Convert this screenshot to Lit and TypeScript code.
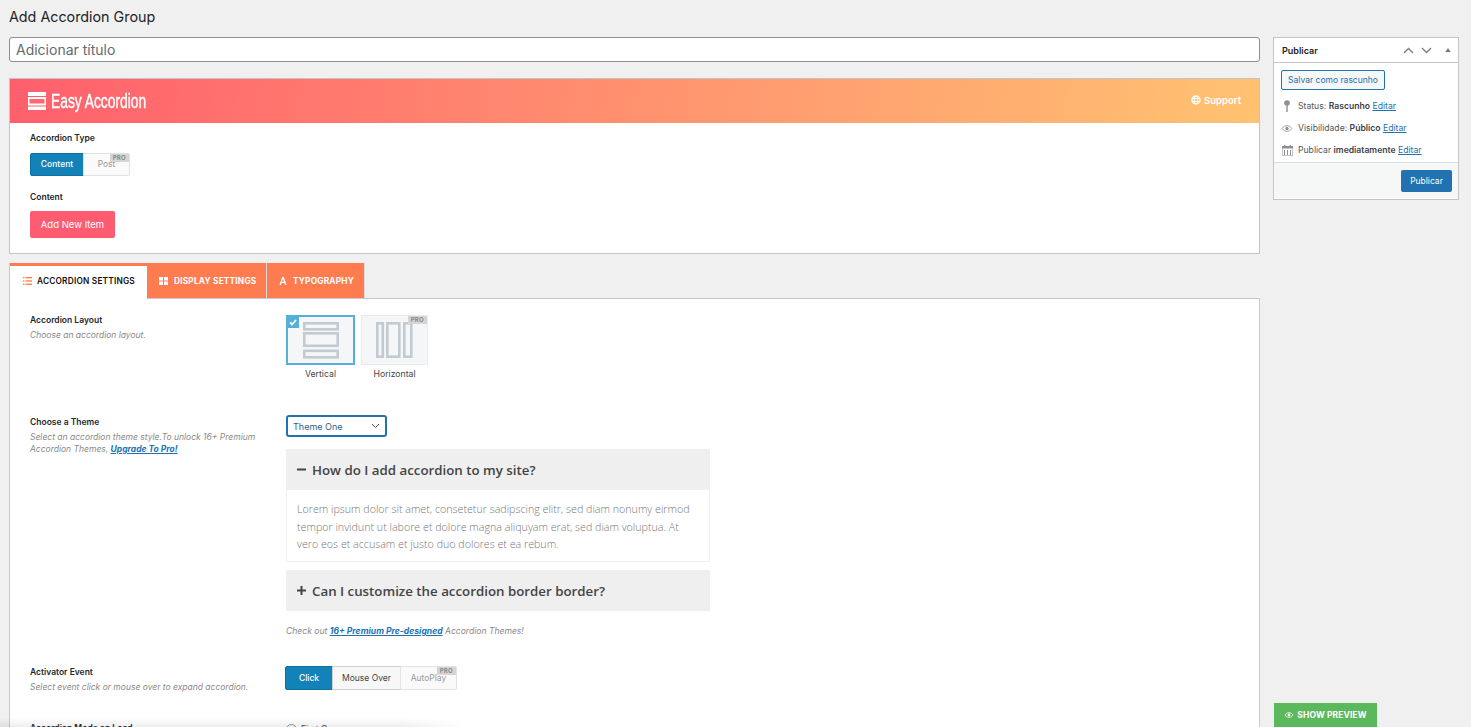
import { LitElement, html, css } from "lit";
import { customElement } from "lit/decorators.js";

const eye = (w: number, c: string) => html`<svg width=${w} height=${Math.round(w * 0.62)} viewBox="0 0 16 10"><path fill="none" stroke=${c} stroke-width="1.2" d="M1 5c2-2.6 4.4-4 7-4s5 1.4 7 4c-2 2.6-4.400 4-7 4S3 7.600 1 5z"/><circle cx="8" cy="5" r="2.400" fill=${c}/></svg>`;

@customElement("app-root")
export class AppRoot extends LitElement {
  static styles = css`
    :host { display: block; height: 727px; overflow: hidden; background: #f0f0f1; font-family: Inter, "Liberation Sans", sans-serif; color: #1d2327; position: relative; }
    * { box-sizing: border-box; }
    a { color: #2271b1; text-decoration: underline; }
    .page { display: grid; grid-template-columns: 1251px 186px; column-gap: 13px; padding: 0 0 0 9px; }
    h1 { margin: 0; font-size: 14.300px; font-weight: 400; line-height: 17px; padding-top: 8px; height: 37px; }
    .title { height: 25px; background: #fff; border: 1px solid #8c8f94; border-radius: 3px; font-size: 14px; color: #646970; padding: 0 6px; line-height: 23px; }
    .card { margin-top: 16px; height: 176px; background: #fff; border: 1px solid #c3c4c7; }
    .hero { height: 44px; background: linear-gradient(100deg, #ff5f6d, #ffc371); display: flex; align-items: center; justify-content: space-between; padding: 0 18px; color: #fff; }
    .brand { display: flex; align-items: center; gap: 5px; }
    .brand span { font-family: "Liberation Sans", sans-serif; font-size: 20px; line-height: 24px; display: inline-block; transform: scaleX(0.69); transform-origin: left center; white-space: nowrap; -webkit-text-stroke: 0.4px #fff; }
    .support { display: flex; align-items: center; gap: 3px; font-size: 9.500px; font-weight: 600; margin-top: -2px; }
    .body { padding: 9px 20px; }
    .lab { font-size: 8.500px; font-weight: 600; line-height: 12px; color: #23282d; white-space: nowrap; }
    .seg { display: flex; width: fit-content; height: 23px; position: relative; margin-top: 9px; }
    .seg > div { display: flex; align-items: center; justify-content: center; font-size: 8.500px; border: 1px solid #ccc; background: #f7f7f7; color: #444; margin-left: -1px; position: relative; padding-bottom: 1px; }
    .seg > div:first-child { margin-left: 0; border-radius: 2px 0 0 2px; }
    .seg > div:last-child { border-radius: 0 2px 2px 0; }
    .seg > .on { background: #1282b9; border-color: #0f6fa0; color: #fff; font-weight: 500; }
    .seg > .dis { color: #999; background: #fafafa; border-color: #e2e2e2; }
    .pro { position: absolute; top: 0; right: 0; background: #d5d5d5; color: #888; font-size: 6px; font-weight: 700; line-height: 7px; padding: 0 3px; letter-spacing: .3px; height: 8px; }
    .lab2 { margin-top: 15px; }
    .add { margin-top: 8px; width: 85px; height: 27px; background: #ff5c72; border-radius: 2px; color: #fff; font-size: 9.500px; display: flex; align-items: center; justify-content: center; }
    .tabwrap { margin-top: 9px; }
    .tabs { display: flex; height: 36px; border-left: 1px solid #c9c9c9; border-bottom: 1px solid #c9c9c9; }
    .tab { height: 35px; background: #ff7c50; color: #fff; font-size: 8.300px; font-weight: 700; display: flex; align-items: center; letter-spacing: 0.2px; border-right: 1px solid #dcdcdc; white-space: nowrap; gap: 6px; }
    .tab.cur { background: #fff; color: #111; border-top: 3px solid #ff7c50; height: 36px; margin-bottom: -1px; border-right: 0; font-weight: 600; padding-bottom: 3px; gap: 5px; }
    .panel { background: #fff; border: 1px solid #c9c9c9; border-top: 0; height: 500px; padding: 0 20px; display: grid; grid-template-columns: 256px 1fr; align-content: start; }
    .desc { font-size: 8.500px; font-style: italic; color: #8a8a8a; line-height: 12px; margin-top: 3px; white-space: nowrap; }
    .row1 { height: 102px; padding-top: 15px; }
    .row1c { height: 102px; padding-top: 16px; display: flex; gap: 6px; }
    .lay { width: 69px; }
    .lay2 { width: 67px; }
    .box { width: 100%; height: 50px; background: #f5f6f8; border: 2px solid #54b0d8; position: relative; display: flex; align-items: center; justify-content: center; }
    .box.off { border: 1px solid #eaebed; height: 50px; }
    .cap { font-size: 8.700px; text-align: center; color: #444; line-height: 10px; margin-top: 4px; }
    .tick { position: absolute; left: -1px; top: -1px; width: 12px; height: 12px; background: #54b0d8; display: flex; align-items: center; justify-content: center; }
    .row2 { height: 265px; padding-top: 15px; }
    .row2c { height: 265px; padding-top: 14px; }
    .select { width: 101px; height: 22px; border: 2px solid #2271b1; border-radius: 3px; display: flex; align-items: center; justify-content: space-between; padding: 0 5px; font-size: 9px; color: #2c5f8d; background: #fff; }
    .acc { width: 424px; margin-top: 12px; font-family: "Open Sans", sans-serif; }
    .q { height: 41px; background: #efefef; display: flex; align-items: center; font-size: 13.300px; font-weight: 600; color: #444; padding: 0 11px; gap: 6px; border-radius: 1px; white-space: nowrap; }
    .q svg { flex: none; }
    .a { height: 72px; border: 1px solid #f0f0f0; border-top: 0; padding: 11px 10px; font-size: 10.700px; line-height: 17.500px; color: #777; font-weight: 300; margin-bottom: 8px; white-space: nowrap; }
    .note { font-size: 8.570px; font-style: italic; color: #888; margin-top: 15px; line-height: 10px; white-space: nowrap; }
    .note a { font-weight: 700; }
    .row3 { height: 56px; }
    .row3c { height: 56px; }
    .row3c .seg { margin: 0 0 0 -1px; height: 24px; }
    .rad { display: flex; align-items: center; gap: 4px; font-size: 8.500px; color: #444; margin-top: 1px; height: 12px; }
    .rad i { width: 11px; height: 11px; border-radius: 50%; border: 1px solid #8c8f94; display: flex; align-items: center; justify-content: center; }
    .rad i b { width: 5px; height: 5px; border-radius: 50%; background: #2271b1; }
    .side { margin-top: 37px; height: 163px; background: #fff; border: 1px solid #c3c4c7; }
    .shead { height: 25px; border-bottom: 1px solid #c3c4c7; display: flex; align-items: center; justify-content: space-between; padding: 0 7px 0 8px; font-size: 9px; font-weight: 600; }
    .sicons { display: flex; gap: 7px; align-items: center; }
    .tri { margin-left: 6px; }
    .sbody { padding: 7px 7px 0; height: 99px; font-size: 8.650px; color: #50575e; }
    .draft { height: 20px; width: 104px; border: 1px solid #2271b1; border-radius: 2px; background: #f6f7f7; color: #2271b1; font-size: 8.500px; display: flex; align-items: center; justify-content: center; }
    .meta { display: flex; align-items: center; gap: 5px; height: 12px; margin-top: 10px; white-space: nowrap; }
    .meta:first-of-type { margin-top: 9px; }
    .meta .ic { width: 12px; display: flex; justify-content: center; flex: none; }
    .meta b { font-weight: 600; color: #3c434a; }
    .sfoot { height: 36px; border-top: 1px solid #dcdcde; background: #f6f7f7; display: flex; align-items: center; justify-content: flex-end; padding: 0 6px; }
    .pub { width: 51px; height: 22px; background: #2271b1; color: #fff; border-radius: 2px; font-size: 8.500px; display: flex; align-items: center; justify-content: center; }
    .preview { position: absolute; left: 1274px; top: 703px; width: 103px; height: 24px; background: #5cb85c; color: #fff; font-size: 8.500px; font-weight: 700; display: flex; align-items: center; justify-content: center; gap: 3px; letter-spacing: .1px; }
    .fade { position: absolute; left: 0; bottom: 0; width: 470px; height: 9px; background: linear-gradient(to top, rgba(0,0,0,.07), rgba(0,0,0,0)); -webkit-mask-image: linear-gradient(to right, #000 85%, transparent); }
  `;

  render() {
    return html`
      <div class="page">
        <main>
          <h1>Add Accordion Group</h1>
          <div class="title">Adicionar título</div>
          <section class="card">
            <div class="hero">
              <div class="brand">
                <svg width="18" height="18" viewBox="0 0 18 18" fill="#fff"><rect width="18" height="4"/><rect y="5" width="18" height="8.500" /><rect x="1.500" y="7" width="15" height="4.500" fill="#ff6a6e"/><rect y="14.500" width="18" height="3.500"/></svg>
                <span>Easy Accordion</span>
              </div>
              <div class="support">
                <svg width="10" height="10" viewBox="0 0 10 10"><circle cx="5" cy="5" r="4" fill="none" stroke="#fff" stroke-width="1.500"/><path d="M3.500 1v8M6.500 1v8M1 3.500h8M1 6.500h8" stroke="#fff" stroke-width="1"/></svg>
                Support
              </div>
            </div>
            <div class="body">
              <div class="lab">Accordion Type</div>
              <div class="seg"><div class="on" style="width:54px">Content</div><div class="dis" style="width:47px">Post<span class="pro">PRO</span></div></div>
              <div class="lab lab2">Content</div>
              <div class="add">Add New Item</div>
            </div>
          </section>
          <div class="tabwrap">
            <div class="tabs">
              <div class="tab cur" style="width:137px;padding-left:13px">
                <svg width="9" height="8" viewBox="0 0 9 8" fill="#ff7c50"><rect width="1.500" height="1.300"/><rect x="2.500" width="6.500" height="1.300"/><rect y="3.300" width="1.500" height="1.300"/><rect x="2.500" y="3.300" width="6.500" height="1.300"/><rect y="6.600" width="1.500" height="1.300"/><rect x="2.500" y="6.600" width="6.500" height="1.300"/></svg>
                ACCORDION SETTINGS
              </div>
              <div class="tab" style="width:120px;padding-left:12px">
                <svg width="9" height="8" viewBox="0 0 9 8" fill="#fff"><rect width="4" height="3.500"/><rect x="5" width="4" height="3.500"/><rect y="4.500" width="4" height="3.500"/><rect x="5" y="4.500" width="4" height="3.500"/></svg>
                DISPLAY SETTINGS
              </div>
              <div class="tab" style="width:98px;padding-left:12px">
                <svg width="8" height="8" viewBox="0 0 8 8"><path d="M.5 8 3.200 0h1.600L7.500 8H6L5.400 6H2.600L2 8zM3 4.700h2L4 1.700z" fill="#fff"/></svg>
                TYPOGRAPHY
              </div>
            </div>
            <div class="panel">
              <div class="row1">
                <div class="lab">Accordion Layout</div>
                <div class="desc">Choose an accordion layout.</div>
              </div>
              <div class="row1c">
                <div class="lay">
                  <div class="box">
                    <span class="tick"><svg width="8" height="7" viewBox="0 0 8 7"><path d="M1 3.500 3 5.500 7 1" fill="none" stroke="#fff" stroke-width="1.800"/></svg></span>
                    <svg width="36" height="37" viewBox="0 0 36 37" fill="none" stroke="#c2cbd2" stroke-width="2.600"><rect x="1.300" y="1.300" width="33.400" height="6"/><rect x="1.300" y="11.300" width="33.400" height="12.500"/><rect x="1.300" y="28.800" width="33.400" height="6.500"/></svg>
                  </div>
                  <div class="cap">Vertical</div>
                </div>
                <div class="lay2">
                  <div class="box off">
                    <span class="pro">PRO</span>
                    <svg width="37" height="36" viewBox="0 0 37 36" fill="none" stroke="#c2cbd2" stroke-width="2.600"><rect x="1.300" y="1.300" width="5.500" height="33.400"/><rect x="11.300" y="1.300" width="12" height="33.400"/><rect x="28.300" y="1.300" width="7" height="33.400"/></svg>
                  </div>
                  <div class="cap">Horizontal</div>
                </div>
              </div>

              <div class="row2">
                <div class="lab">Choose a Theme</div>
                <div class="desc">Select an accordion theme style.To unlock 16+ Premium<br />Accordion Themes, <a href="#"><b>Upgrade To Pro!</b></a></div>
              </div>
              <div class="row2c">
                <div class="select">Theme One <svg width="9" height="6" viewBox="0 0 9 6"><path d="M1 1l3.500 3.500L8 1" fill="none" stroke="#555" stroke-width="1"/></svg></div>
                <div class="acc">
                  <div class="q"><svg width="9" height="9" viewBox="0 0 9 9"><rect y="3.500" width="9" height="2" fill="#444"/></svg>How do I add accordion to my site?</div>
                  <div class="a">Lorem ipsum dolor sit amet, consetetur sadipscing elitr, sed diam nonumy eirmod<br />tempor invidunt ut labore et dolore magna aliquyam erat, sed diam voluptua. At<br />vero eos et accusam et justo duo dolores et ea rebum.</div>
                  <div class="q"><svg width="9" height="9" viewBox="0 0 9 9"><path d="M3.500 0h2v3.500H9v2H5.500V9h-2V5.500H0v-2h3.500z" fill="#444"/></svg>Can I customize the accordion border border?</div>
                </div>
                <div class="note">Check out <a href="#">16+ Premium Pre-designed</a> Accordion Themes!</div>
              </div>

              <div class="row3">
                <div class="lab">Activator Event</div>
                <div class="desc">Select event click or mouse over to expand accordion.</div>
              </div>
              <div class="row3c">
                <div class="seg"><div class="on" style="width:48px">Click</div><div style="width:69px">Mouse Over</div><div class="dis" style="width:57px">AutoPlay<span class="pro">PRO</span></div></div>
              </div>

              <div class="lab">Accordion Mode on Load</div>
              <div class="rad"><i><b></b></i> First Open</div>
            </div>
          </div>
        </main>
        <aside class="side">
          <div class="shead">Publicar
            <div class="sicons">
              <svg width="11" height="7" viewBox="0 0 11 7"><path d="M1 6l4.500-4.500L10 6" fill="none" stroke="#787c82" stroke-width="1.300"/></svg>
              <svg width="11" height="7" viewBox="0 0 11 7"><path d="M1 1l4.500 4.500L10 1" fill="none" stroke="#787c82" stroke-width="1.300"/></svg>
              <svg class="tri" width="6" height="4" viewBox="0 0 7 5"><path d="M3.500 0 7 5H0z" fill="#787c82"/></svg>
            </div>
          </div>
          <div class="sbody">
            <div class="draft">Salvar como rascunho</div>
            <div class="meta"><span class="ic"><svg width="6" height="12" viewBox="0 0 6 12" fill="#8c8f94"><circle cx="3" cy="3" r="2.800"/><rect x="2.300" y="5" width="1.400" height="7"/></svg></span><span>Status: <b>Rascunho</b> <a href="#">Editar</a></span></div>
            <div class="meta"><span class="ic">${eye(12, "#8c8f94")}</span><span>Visibilidade: <b>Público</b> <a href="#">Editar</a></span></div>
            <div class="meta"><span class="ic"><svg width="11" height="11" viewBox="0 0 11 11"><path d="M0 1.500h11V11H0z" fill="none" stroke="#8c8f94"/><rect y="1" width="11" height="2.500" fill="#8c8f94"/><rect x="2" y="0" width="1.500" height="2" fill="#8c8f94"/><rect x="7.500" y="0" width="1.500" height="2" fill="#8c8f94"/><path d="M2.500 5v5M5.500 5v5M8.500 5v5" stroke="#8c8f94"/></svg></span><span>Publicar <b>imediatamente</b> <a href="#">Editar</a></span></div>
          </div>
          <div class="sfoot"><div class="pub">Publicar</div></div>
        </aside>
      </div>
      <div class="preview">${eye(10, "#fff")} SHOW PREVIEW</div>
      <div class="fade"></div>
    `;
  }
}
